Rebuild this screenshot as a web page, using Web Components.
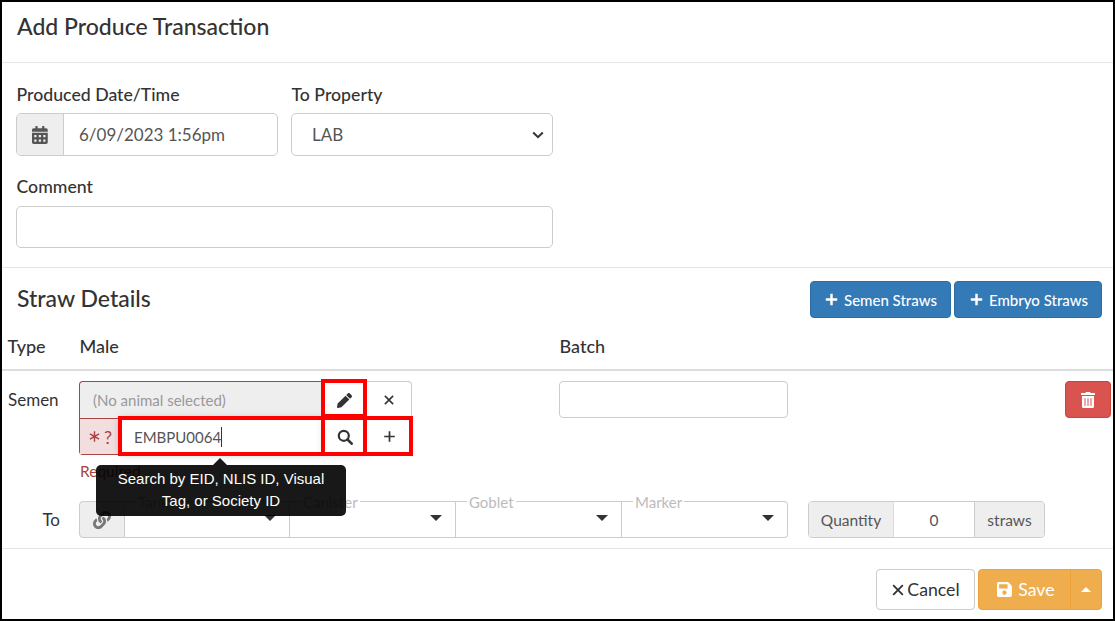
<!DOCTYPE html>
<html lang="en">
<head>
<meta charset="utf-8">
<title>Add Produce Transaction</title>
<style>
html,body{margin:0;padding:0;background:#fff;font-family:"Lato","Noto Sans",sans-serif;color:#333}
</style>
</head>
<body>
<tx-dialog>
  <tx-header>Add Produce Transaction</tx-header>
  <tx-form>
    <tx-field label="Produced Date/Time"><tx-input icon="calendar" value="6/09/2023 1:56pm"></tx-input></tx-field>
    <tx-field label="To Property"><tx-select value="LAB"></tx-select></tx-field>
    <tx-field label="Comment" wide><tx-input style="height:42px"></tx-input></tx-field>
  </tx-form>
  <tx-straws>
    <tx-btn slot="actions" icon="plusb" kind="primary" style="padding-left:14px">Semen Straws</tx-btn>
    <tx-btn slot="actions" icon="plusb" kind="primary">Embryo Straws</tx-btn>
  </tx-straws>
  <tx-footer>
    <tx-btn icon="times" kind="default">Cancel</tx-btn>
    <tx-save></tx-save>
  </tx-footer>
</tx-dialog>
<script>
const P = {
 calendar:[448,512,'M0 464c0 26.5 21.5 48 48 48h352c26.5 0 48-21.5 48-48V192H0v272zm320-196c0-6.6 5.4-12 12-12h40c6.6 0 12 5.4 12 12v40c0 6.6-5.4 12-12 12h-40c-6.6 0-12-5.4-12-12v-40zm0 128c0-6.6 5.4-12 12-12h40c6.6 0 12 5.4 12 12v40c0 6.6-5.4 12-12 12h-40c-6.6 0-12-5.4-12-12v-40zM192 268c0-6.6 5.4-12 12-12h40c6.6 0 12 5.4 12 12v40c0 6.6-5.4 12-12 12h-40c-6.6 0-12-5.4-12-12v-40zm0 128c0-6.6 5.4-12 12-12h40c6.6 0 12 5.4 12 12v40c0 6.6-5.4 12-12 12h-40c-6.6 0-12-5.4-12-12v-40zM64 268c0-6.6 5.4-12 12-12h40c6.6 0 12 5.4 12 12v40c0 6.6-5.4 12-12 12H76c-6.6 0-12-5.4-12-12v-40zm0 128c0-6.6 5.4-12 12-12h40c6.6 0 12 5.4 12 12v40c0 6.6-5.4 12-12 12H76c-6.6 0-12-5.4-12-12v-40zM400 64h-48V16c0-8.8-7.2-16-16-16h-32c-8.8 0-16 7.2-16 16v48H160V16c0-8.8-7.2-16-16-16h-32c-8.8 0-16 7.2-16 16v48H48C21.5 64 0 85.5 0 112v48h448v-48c0-26.5-21.5-48-48-48z'],
 pencil:[512,512,'M497.9 142.1l-46.1 46.1c-4.7 4.7-12.3 4.7-17 0l-111-111c-4.7-4.7-4.7-12.3 0-17l46.1-46.1c18.7-18.7 49.1-18.7 67.9 0l60.1 60.1c18.8 18.7 18.8 49.1 0 67.9zM284.2 99.8L21.6 362.4.4 483.9c-2.9 16.4 11.4 30.6 27.8 27.8l121.5-21.3 262.6-262.6c4.7-4.7 4.7-12.3 0-17l-111-111c-4.8-4.7-12.4-4.7-17.1 0z'],
 link:[512,512,'M326.612 185.391c59.747 59.809 58.927 155.698.36 214.59-.11.12-.24.25-.36.37l-67.2 67.2c-59.27 59.27-155.699 59.262-214.96 0-59.27-59.26-59.27-155.7 0-214.96l37.106-37.106c9.84-9.84 26.786-3.3 27.294 10.606.648 17.722 3.826 35.527 9.69 52.721 1.986 5.822.567 12.262-3.783 16.612l-13.087 13.087c-28.026 28.026-28.905 73.66-1.155 101.96 28.024 28.579 74.086 28.749 102.325.51l67.2-67.19c28.191-28.191 28.073-73.757 0-101.83-3.701-3.694-7.429-6.564-10.341-8.569a16.037 16.037 0 0 1-6.947-12.606c-.396-10.567 3.348-21.456 11.698-29.806l21.054-21.055c5.521-5.521 14.182-6.199 20.584-1.731a152.482 152.482 0 0 1 20.522 17.197zM467.547 44.449c-59.261-59.262-155.69-59.27-214.96 0l-67.2 67.2c-.12.12-.25.25-.36.37-58.566 58.892-59.387 154.781.36 214.59a152.454 152.454 0 0 0 20.521 17.196c6.402 4.468 15.064 3.789 20.584-1.731l21.054-21.055c8.35-8.35 12.094-19.239 11.698-29.806a16.037 16.037 0 0 0-6.947-12.606c-2.912-2.005-6.64-4.875-10.341-8.569-28.073-28.073-28.191-73.639 0-101.83l67.2-67.19c28.239-28.239 74.3-28.069 102.325.51 27.75 28.3 26.872 73.934-1.155 101.96l-13.087 13.087c-4.35 4.35-5.769 10.79-3.783 16.612 5.864 17.194 9.042 34.999 9.69 52.721.509 13.906 17.454 20.446 27.294 10.606l37.106-37.106c59.271-59.259 59.271-155.699.001-214.959z'],
 trash:[448,512,'M32 464a48 48 0 0 0 48 48h288a48 48 0 0 0 48-48V128H32zm272-256a16 16 0 0 1 32 0v224a16 16 0 0 1-32 0zm-96 0a16 16 0 0 1 32 0v224a16 16 0 0 1-32 0zm-96 0a16 16 0 0 1 32 0v224a16 16 0 0 1-32 0zM432 32H312l-9.4-18.7A24 24 0 0 0 281.1 0H166.8a23.72 23.72 0 0 0-21.4 13.3L136 32H16A16 16 0 0 0 0 48v32a16 16 0 0 0 16 16h416a16 16 0 0 0 16-16V48a16 16 0 0 0-16-16z'],
 save:[448,512,'M433.941 129.941l-83.882-83.882A48 48 0 0 0 316.118 32H48C21.49 32 0 53.49 0 80v352c0 26.51 21.49 48 48 48h352c26.51 0 48-21.49 48-48V163.882a48 48 0 0 0-14.059-33.941zM224 416c-35.346 0-64-28.654-64-64 0-35.346 28.654-64 64-64s64 28.654 64 64c0 35.346-28.654 64-64 64zm96-304.52V212c0 6.627-5.373 12-12 12H76c-6.627 0-12-5.373-12-12V108c0-6.627 5.373-12 12-12h228.52c3.183 0 6.235 1.264 8.485 3.515l3.48 3.48A11.996 11.996 0 0 1 320 111.48z'],
};
function icon(name,size,color){
  const c=color||'currentColor';
  const s=(inner,vb='0 0 16 16')=>`<svg width="${size}" height="${size}" viewBox="${vb}" aria-hidden="true" style="display:block;flex:none">${inner}</svg>`;
  if(name==='plus')return s(`<path d="M8 1.5v13M1.5 8h13" stroke="${c}" stroke-width="2.1" fill="none"/>`);
  if(name==='plusb')return s(`<path d="M8 1v14M1 8h14" stroke="${c}" stroke-width="3" fill="none"/>`);
  if(name==='times')return s(`<path d="M2.5 2.5l11 11M13.5 2.5l-11 11" stroke="${c}" stroke-width="2.1" fill="none"/>`);
  if(name==='search')return s(`<circle cx="6.8" cy="6.8" r="5" stroke="${c}" stroke-width="2.2" fill="none"/><path d="M10.5 10.5l4.2 4.2" stroke="${c}" stroke-width="2.6" stroke-linecap="round" fill="none"/>`);
  if(name==='star')return s(`<path d="M8 1.5v13M2.4 4.8l11.2 6.4M13.6 4.8L2.4 11.2" stroke="${c}" stroke-width="1.8" fill="none"/>`);
  const p=P[name];
  return `<svg width="${size*p[0]/p[1]}" height="${size}" viewBox="0 0 ${p[0]} ${p[1]}" aria-hidden="true" style="display:block;flex:none"><path fill="${c}" d="${p[2]}"/></svg>`;
}
function def(name,render){
  customElements.define(name,class extends HTMLElement{
    constructor(){super();this.attachShadow({mode:'open'});}
    connectedCallback(){this.shadowRoot.innerHTML=render(this);}
  });
}
const FONT='font-family:"Lato","Noto Sans",sans-serif;';

def('tx-dialog',()=>`<style>
:host{display:block;box-sizing:border-box;width:1115px;height:621px;border:2px solid #000;background:#fff;${FONT}color:#333;overflow:hidden}
</style><slot></slot>`);

def('tx-header',()=>`<style>
:host{display:flex;align-items:center;box-sizing:border-box;height:61px;padding:0 15px 13px;border-bottom:1px solid #e5e5e5;font-size:23px;font-weight:500;color:#333}
</style><slot></slot>`);

def('tx-form',()=>`<style>
:host{display:grid;grid-template-columns:262px 262px;column-gap:13px;row-gap:19px;padding:20px 14px 19px;border-bottom:1px solid #e5e5e5;justify-content:start}
</style><slot></slot>`);

def('tx-field',h=>`<style>
:host{display:block;${h.hasAttribute('wide')?'grid-column:1 / span 2;':''}}
label{display:block;height:22px;line-height:23px;margin:0 0 ${h.hasAttribute('wide')?9:8}px .5px;font-size:17.7px;font-weight:500;color:#333}
</style><label>${h.getAttribute('label')}</label><slot></slot>`);

def('tx-input',h=>{
  const ic=h.getAttribute('icon');
  return `<style>
:host{display:flex;box-sizing:border-box;height:43px;border:1px solid #ccc;border-radius:5px;overflow:hidden;background:#fff;font-size:17px;color:#555}
.a{flex:none;width:46px;display:flex;align-items:center;justify-content:center;background:#eee;border-right:1px solid #ccc;color:#555}
.v{flex:1;display:flex;align-items:center;padding-left:15px}
</style>${ic?`<span class="a">${icon(ic,18)}</span>`:''}<span class="v">${h.getAttribute('value')||''}</span>`;
});

def('tx-select',h=>`<style>
:host{display:flex;align-items:center;box-sizing:border-box;height:43px;border:1px solid #ccc;border-radius:5px;background:#fff;padding:0 8px 0 20px;font-size:17px;color:#555}
span{flex:1}
</style><span>${h.getAttribute('value')}</span><svg width="12" height="8" viewBox="0 0 12 8"><path d="M1.2 1.5L6 6.2l4.8-4.7" stroke="#333" stroke-width="2" fill="none"/></svg>`);

def('tx-btn',h=>{
  const k=h.getAttribute('kind');
  const primary=k==='primary';
  return `<style>
:host{display:inline-flex;align-items:center;justify-content:center;box-sizing:border-box;border-radius:4px;
 ${primary?`height:37px;padding:0 13px 0 15px;background:#337ab7;border:1px solid #2e6da4;color:#fff;font-size:15px;gap:6px;font-weight:500;`
 :`height:41px;width:99px;background:#fff;border:1px solid #ccc;color:#333;font-size:17.7px;gap:2px;`}}
</style>${icon(h.getAttribute('icon'),primary?13:14)}<slot></slot>`;
});

def('tx-straws',()=>`<style>
:host{display:block}
.top{display:flex;align-items:center;justify-content:space-between;padding:13px 11px 0 15px}
h2{margin:0;font-size:23px;font-weight:500;color:#333;line-height:35px;height:37px}
.acts{display:flex;gap:3px}
.grid{display:grid;grid-template-columns:77px 480px 229px 277px 46px}
.head{padding-top:17px;padding-bottom:12px;border-bottom:2px solid #ddd;font-size:18px;font-weight:500;line-height:22px}
.head span{padding-left:.5px}
.head span:first-child{padding-left:5.5px}
.row{padding-top:10px}
.type{padding-left:6px;font-size:17px;line-height:37px;color:#333}
.batch{box-sizing:border-box;height:37px;border:1px solid #ccc;border-radius:4px;background:#fff}
.del{height:37px;box-sizing:border-box;background:#d9534f;border:1px solid #d43f3a;border-radius:4px;display:flex;align-items:center;justify-content:center}
.row2{display:flex;margin-top:19px;padding-bottom:10px;border-bottom:1px solid #e5e5e5}
.to{width:58px;flex:none;text-align:right;font-size:17px;line-height:37px;color:#333;margin-right:19px}
</style>
<div class="top"><h2>Straw Details</h2><div class="acts"><slot name="actions"></slot></div></div>
<div class="grid head"><span>Type</span><span>Male</span><span>Batch</span></div>
<div class="grid row">
  <div class="type">Semen</div>
  <div><tx-male></tx-male></div>
  <div class="batch"></div>
  <div></div>
  <div class="del">${icon('trash',16,'#fff')}</div>
</div>
<div class="row2">
  <div class="to">To</div>
  <tx-location></tx-location>
  <tx-qty></tx-qty>
</div>`);

def('tx-male',()=>`<style>
:host{display:block;position:relative;width:333px;height:101px;font-size:15px}
.grp{display:grid;grid-template-columns:244px 44px 45px;grid-template-rows:37px 37px;height:74px}
.c{box-sizing:border-box;display:flex;align-items:center;justify-content:center;color:#333}
.none{justify-content:flex-start;padding-left:13px;background:#eee;color:#999;border:1px solid #a94442;border-bottom:none;border-right-color:#ccc;border-radius:4px 0 0 0}
.b1{border:1px solid #ccc;border-left:none;border-bottom:none;padding-right:1px}
.b2{border:1px solid #ccc;border-left:none;border-bottom:none;border-radius:0 4px 0 0}
.wrap{grid-column:1;display:flex;border:1px solid #a94442;border-right:none;border-radius:0 0 0 4px;justify-content:flex-start;padding:0;align-items:stretch}
.req{width:40px;background:#f2dede;color:#a94442;display:flex;align-items:center;justify-content:center;gap:3px;font-size:18px}
.txt{flex:1;display:flex;align-items:center;padding-left:14px;background:#fff;color:#555;font-size:15px;box-shadow:0 0 8px rgba(0,0,0,.25)}
.caret{display:inline-block;width:1px;height:20px;background:#333}
.b3{background:#fff;box-shadow:0 0 8px rgba(0,0,0,.15);padding-right:1px}
.b4{background:#fff}
.err{color:#a94442;font-size:15.5px;line-height:20px;margin-top:6px;padding-left:1px}
.red{position:absolute;box-sizing:border-box;border:4px solid #f00;pointer-events:none}
.tip{position:absolute;left:17px;top:84px;width:250px;box-sizing:border-box;padding:3px 4px 4px;background:#000;opacity:.9;color:#fff;border-radius:5px;text-align:center;font:15px/22px "Liberation Sans",Arial,sans-serif;z-index:3}
.tip i{position:absolute;left:117px;top:-7px;width:0;height:0;border:solid transparent;border-width:0 7px 7px;border-bottom-color:#000}
</style>
<div class="grp">
  <div class="c none">(No animal selected)</div>
  <div class="c b1">${icon('pencil',15)}</div>
  <div class="c b2">${icon('times',12)}</div>
  <div class="c wrap"><div class="req">${icon('star',13,'#a94442')}<span>?</span></div><div class="txt">EMBPU0064<span class="caret"></span></div></div>
  <div class="c b3">${icon('search',16)}</div>
  <div class="c b4">${icon('plus',13)}</div>
</div>
<div class="err">Required</div>
<div class="red" style="left:242px;top:-2px;width:46px;height:39px"></div>
<div class="red" style="left:39px;top:35px;width:207px;height:40px"></div>
<div class="red" style="left:242px;top:35px;width:46px;height:40px"></div>
<div class="red" style="left:284px;top:35px;width:50px;height:40px"></div>
<div class="tip"><i></i>Search by EID, NLIS ID, Visual<br>Tag, or Society ID</div>`);

def('tx-location',()=>`<style>
:host{display:flex;flex:none;box-sizing:border-box;width:709px;height:37px}
.a{flex:none;width:46px;box-sizing:border-box;display:flex;align-items:center;justify-content:center;background:#eee;border:1px solid #ccc;border-radius:4px 0 0 4px;color:#777}
</style><div class="a">${icon('link',18)}</div>
<tx-float label="Tank" style="width:165px"></tx-float><tx-float label="Canister" style="width:166px"></tx-float><tx-float label="Goblet" style="width:166px"></tx-float><tx-float label="Marker" last style="width:166px"></tx-float>`);

def('tx-float',h=>`<style>
:host{display:block;position:relative;box-sizing:border-box;height:37px;border:1px solid #ccc;border-left:none;${h.hasAttribute('last')?'border-radius:0 4px 4px 0;':''}}
span{position:absolute;left:11px;top:-9px;padding:0 2px;background:#fff;font-size:15px;line-height:18px;color:#bbb}
i{position:absolute;right:13px;top:13px;width:0;height:0;border:solid transparent;border-width:6px 6px 0;border-top-color:#333}
</style><span>${h.getAttribute('label')}</span><i></i>`);

def('tx-qty',()=>`<style>
:host{display:flex;flex:none;margin-left:20px;box-sizing:border-box;width:237px;height:37px;border:1px solid #ccc;border-radius:4px;overflow:hidden;font-size:15.5px;color:#555}
div{display:flex;align-items:center;justify-content:center;box-sizing:border-box}
.q{width:85px;background:#eee;border-right:1px solid #ddd}
.v{width:81px;background:#fff;border-right:1px solid #ccc}
.s{flex:1;background:#eee}
</style><div class="q">Quantity</div><div class="v">0</div><div class="s">straws</div>`);

def('tx-footer',()=>`<style>
:host{display:flex;justify-content:flex-end;gap:3px;padding:20px 11px 0 0}
</style><slot></slot>`);

def('tx-save',()=>`<style>
:host{display:flex;box-sizing:border-box;width:124px;height:41px;background:#f0ad4e;border:1px solid #eea236;border-radius:4px;color:#fff;font-size:17.7px}
.m{flex:1;display:flex;align-items:center;justify-content:center;gap:6px;border-right:1px solid #eea236;padding-left:3px}
.d{width:30px;display:flex;align-items:center;justify-content:center}
i{width:0;height:0;border:solid transparent;border-width:0 5px 5px;border-bottom-color:#fff}
</style><div class="m">${icon('save',17,'#fff')}<span>Save</span></div><div class="d"><i></i></div>`);
</script>
</body>
</html>
